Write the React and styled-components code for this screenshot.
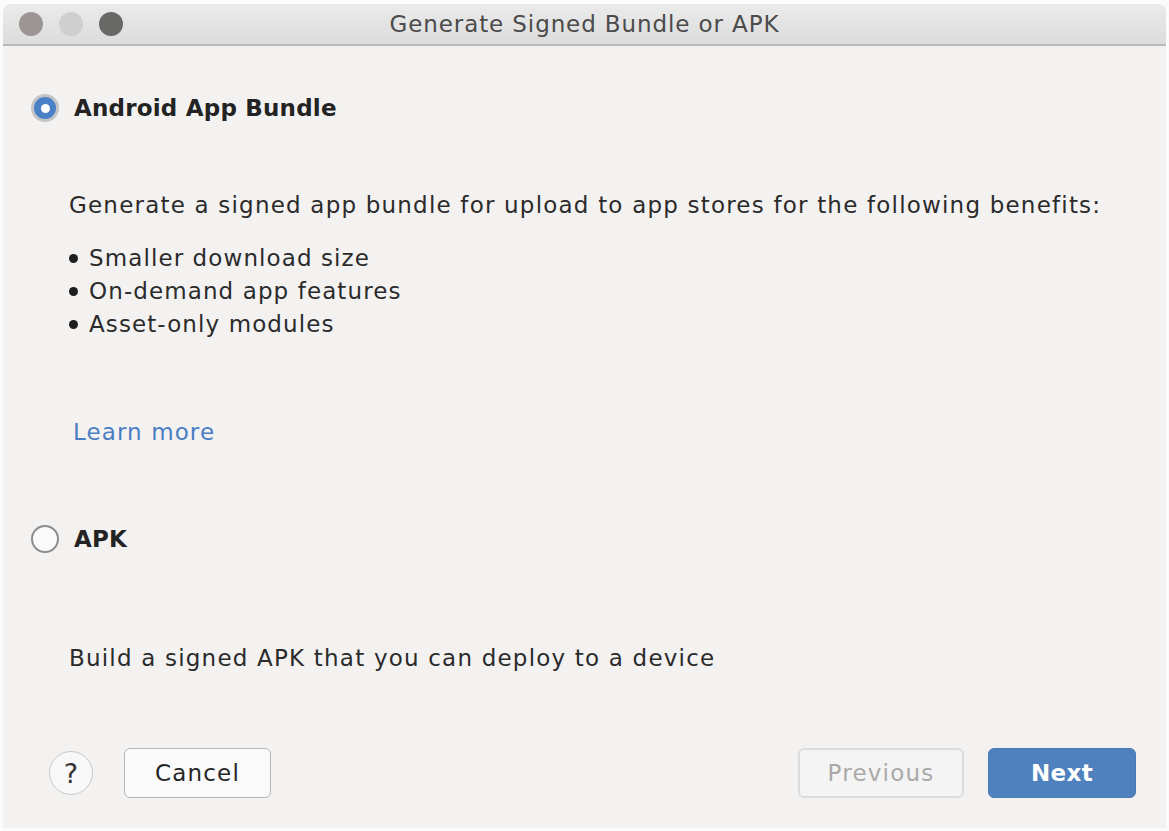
import React from 'react';
import styled, { createGlobalStyle } from 'styled-components';

const GlobalStyle = createGlobalStyle`
  html, body {
    margin: 0;
    padding: 0;
    background: #fbfbfb;
  }
  body {
    font-family: "DejaVu Sans", "Liberation Sans", sans-serif;
  }
`;

const Window = styled.div`
  margin: 4px 3px 0 3px;
  width: 1163px;
  height: 824px;
  background: #f3f2f1;
  border-radius: 8px 8px 0 0;
  overflow: hidden;
  display: flex;
  flex-direction: column;
`;

const TitleBar = styled.div`
  height: 40px;
  flex: none;
  display: flex;
  align-items: center;
  background: linear-gradient(#ebebeb, #dcdcdc);
  border-bottom: 2px solid #b9b9b9;
  position: relative;
`;

const Lights = styled.div`
  display: flex;
  gap: 16px;
  padding-left: 16px;
`;

const Light = styled.span`
  width: 24px;
  height: 24px;
  border-radius: 50%;
  background: ${p => p.color};
`;

const Title = styled.div`
  position: absolute;
  left: 0;
  right: 0;
  text-align: center;
  font-size: 23px;
  letter-spacing: 0.9px;
  color: #4b4b4b;
  pointer-events: none;
`;

const Body = styled.div`
  flex: 1;
  display: flex;
  flex-direction: column;
  padding: 0 0 0 28px;
`;

const RadioRow = styled.div`
  display: flex;
  align-items: center;
  gap: 15px;
  margin-top: ${p => p.top}px;
`;

const RadioOuter = styled.span`
  width: 28px;
  height: 28px;
  border-radius: 50%;
  box-sizing: border-box;
  flex: none;
  display: flex;
  align-items: center;
  justify-content: center;
  ${p => p.checked
    ? `background: #4a80c6; border: 3px solid #c4c4c6;`
    : `background: #fafafa; border: 2px solid #8d8d8d;`}
`;

const RadioDot = styled.span`
  width: 9px;
  height: 9px;
  border-radius: 50%;
  background: #fff;
`;

const RadioLabel = styled.span`
  font-size: 23px;
  font-weight: bold;
  letter-spacing: 0.2px;
  color: #232323;
`;

const Desc = styled.div`
  font-size: 23px;
  color: #2b2b2b;
  padding-left: 38px;
  margin-top: ${p => p.top}px;
  letter-spacing: 1.2px;
`;

const List = styled.ul`
  list-style: none;
  margin: 24px 0 0 0;
  padding: 0 0 0 38px;
`;

const Item = styled.li`
  font-size: 23px;
  color: #2b2b2b;
  line-height: 33px;
  letter-spacing: 1.1px;
  display: flex;
  align-items: center;
  &::before {
    content: '';
    width: 9px;
    height: 9px;
    border-radius: 50%;
    background: #1e1e1e;
    margin-right: 11px;
  }
`;

const Link = styled.a`
  font-size: 23px;
  letter-spacing: 1.1px;
  color: #4a7dc2;
  text-decoration: none;
  margin: 78px 0 0 42px;
  align-self: flex-start;
`;

const Footer = styled.div`
  display: flex;
  align-items: center;
  padding: 0 30px 0 46px;
  margin-top: auto;
  margin-bottom: 30px;
`;

const Help = styled.span`
  width: 44px;
  height: 44px;
  border-radius: 50%;
  box-sizing: border-box;
  border: 1.5px solid #c9c9c9;
  background: #f8f8f8;
  display: flex;
  align-items: center;
  justify-content: center;
  font-size: 27px;
  color: #333;
  margin-right: 31px;
`;

const Button = styled.button`
  width: ${p => p.w}px;
  height: 50px;
  box-sizing: border-box;
  border-radius: 6px;
  font-family: inherit;
  font-size: 23px;
  letter-spacing: ${p => (p.primary ? 0.3 : 1.2)}px;
  padding: 0;
  ${p => p.primary
    ? `background: #4f81be; color: #fff; border: 1px solid #4a79b3; font-weight: bold;`
    : p.disabled
      ? `background: #f4f4f4; color: #a9a9a9; border: 2px solid #dcdcdc;`
      : `background: #fafafa; color: #262626; border: 1.5px solid #b5b5b5;`}
`;

const Spacer = styled.div`
  flex: 1;
`;

const Gap = styled.div`
  width: 24px;
`;

export default function App() {
  return (
    <>
      <GlobalStyle />
      <Window>
        <TitleBar>
          <Lights>
            <Light color="#9b9594" />
            <Light color="#d0cfcf" />
            <Light color="#686966" />
          </Lights>
          <Title>Generate Signed Bundle or APK</Title>
        </TitleBar>
        <Body>
          <RadioRow top={48}>
            <RadioOuter checked><RadioDot /></RadioOuter>
            <RadioLabel>Android App Bundle</RadioLabel>
          </RadioRow>
          <Desc top={70}>Generate a signed app bundle for upload to app stores for the following benefits:</Desc>
          <List>
            <Item>Smaller download size</Item>
            <Item>On-demand app features</Item>
            <Item>Asset-only modules</Item>
          </List>
          <Link href="#">Learn more</Link>
          <RadioRow top={80}>
            <RadioOuter />
            <RadioLabel>APK</RadioLabel>
          </RadioRow>
          <Desc top={92}>Build a signed APK that you can deploy to a device</Desc>
        </Body>
        <Footer>
          <Help>?</Help>
          <Button w={147}>Cancel</Button>
          <Spacer />
          <Button w={166} disabled>Previous</Button>
          <Gap />
          <Button w={148} primary>Next</Button>
        </Footer>
      </Window>
    </>
  );
}
